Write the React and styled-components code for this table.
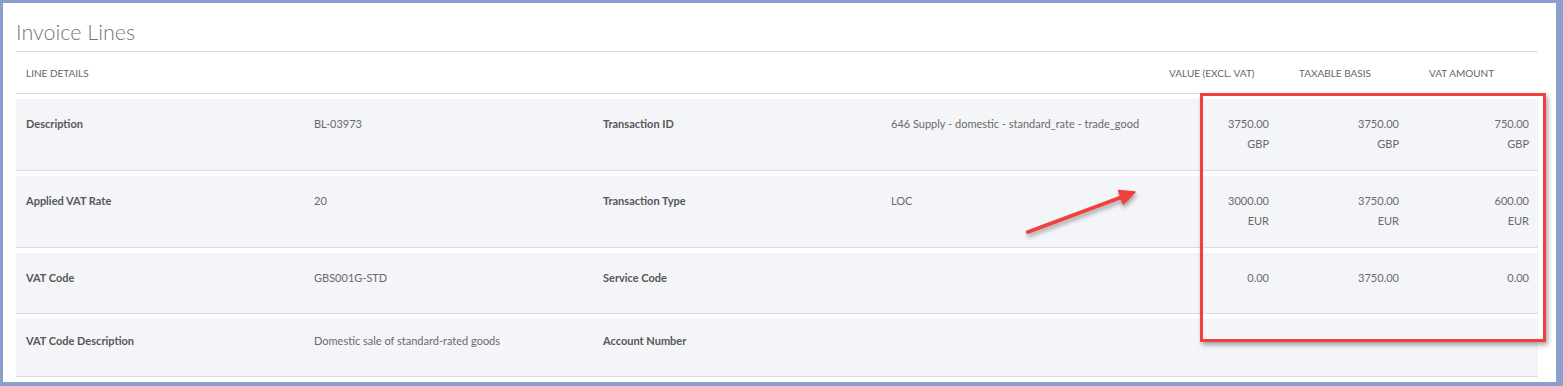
import React from "react";
import styled, { createGlobalStyle } from "styled-components";

const Global = createGlobalStyle`
  html, body { margin: 0; padding: 0; }
  body { background: #8a9fcc; font-family: Lato, "Open Sans", sans-serif; }
`;

const Frame = styled.div`
  width: 1563px;
  height: 386px;
  box-sizing: border-box;
  padding: 3px 7px 4px 3px;
  background: #8a9fcc;
`;

const Card = styled.div`
  position: relative;
  height: 100%;
  background: #fff;
  padding: 0 18px 0 13px;
  box-sizing: border-box;
  overflow: hidden;
`;

const Title = styled.h2`
  margin: 0;
  padding-top: 10px;
  height: 38px;
  line-height: 38px;
  font-size: 21.5px;
  font-weight: 300;
  color: #777;
  border-bottom: 1px solid #dcdcdc;
`;

const Grid = styled.div`
  display: grid;
  grid-template-columns: 288px 289px 288px 248px 130px 130px 130px;
  padding: 0 9px 0 10px;
  box-sizing: border-box;
`;

const HeaderRow = styled(Grid)`
  height: 42px;
  align-items: center;
  border-bottom: 1px solid #dcdcdc;
  font-size: 10px;
  text-transform: uppercase;
  color: #666;
`;

const HeadCell = styled.div`
  grid-column: ${(p) => p.$col};
  padding-left: ${(p) => (p.$num ? "30px" : "0")};
  white-space: nowrap;
`;

const Row = styled(Grid)`
  margin-top: 5px;
  height: ${(p) => p.$h + 1}px;
  padding-top: ${(p) => p.$pt}px;
  background: #f4f5f8;
  border-bottom: 1px solid #dcdcdc;
  align-items: start;
  font-size: 11px;
  line-height: 19.5px;
`;

const Label = styled.div`
  font-weight: 700;
  color: #575757;
  white-space: nowrap;
`;

const Value = styled.div`
  color: #6a6a6a;
  white-space: nowrap;
`;

const Num = styled.div`
  color: #6a6a6a;
  text-align: right;
  white-space: nowrap;
`;

const Highlight = styled.div`
  position: absolute;
  left: 1197px;
  top: 90px;
  width: 340px;
  height: 243px;
  border: 3px solid #f2403f;
  box-shadow: 2px 3px 5px rgba(0, 0, 0, 0.35);
  pointer-events: none;
`;

const ArrowSvg = styled.svg`
  position: absolute;
  left: 1017px;
  top: 177px;
  overflow: visible;
  filter: drop-shadow(1px 3px 2px rgba(0, 0, 0, 0.35));
`;

const rows = [
  {
    h: 71, pt: 15,
    l1: "Description", v1: "BL-03973",
    l2: "Transaction ID", v2: "646 Supply - domestic - standard_rate - trade_good",
    nums: [["3750.00", "GBP"], ["3750.00", "GBP"], ["750.00", "GBP"]],
  },
  {
    h: 71, pt: 15,
    l1: "Applied VAT Rate", v1: "20",
    l2: "Transaction Type", v2: "LOC",
    nums: [["3000.00", "EUR"], ["3750.00", "EUR"], ["600.00", "EUR"]],
  },
  {
    h: 60, pt: 15,
    l1: "VAT Code", v1: "GBS001G-STD",
    l2: "Service Code", v2: "",
    nums: [["0.00"], ["3750.00"], ["0.00"]],
  },
  {
    h: 57, pt: 12,
    l1: "VAT Code Description", v1: "Domestic sale of standard-rated goods",
    l2: "Account Number", v2: "",
    nums: [[], [], []],
  },
];

export default function App() {
  return (
    <>
      <Global />
      <Frame>
        <Card>
          <Title>Invoice Lines</Title>
          <HeaderRow>
            <HeadCell $col={1}>Line Details</HeadCell>
            <HeadCell $col={5} $num>Value (Excl. VAT)</HeadCell>
            <HeadCell $col={6} $num>Taxable Basis</HeadCell>
            <HeadCell $col={7} $num>VAT Amount</HeadCell>
          </HeaderRow>
          {rows.map((r) => (
            <Row key={r.l1} $h={r.h} $pt={r.pt}>
              <Label>{r.l1}</Label>
              <Value>{r.v1}</Value>
              <Label>{r.l2}</Label>
              <Value>{r.v2}</Value>
              {r.nums.map((n, i) => (
                <Num key={i}>
                  {n.map((t, j) => (
                    <div key={j}>{t}</div>
                  ))}
                </Num>
              ))}
            </Row>
          ))}
          <Highlight />
          <ArrowSvg width="130" height="65" viewBox="0 0 130 65">
            <line x1="8" y1="52" x2="102" y2="17" stroke="#f2403f" strokeWidth="4" strokeLinecap="round" />
            <polygon points="115,12 103.2,24 98.6,10.5" fill="#f2403f" stroke="#f2403f" strokeWidth="1.5" strokeLinejoin="round" />
          </ArrowSvg>
        </Card>
      </Frame>
    </>
  );
}
